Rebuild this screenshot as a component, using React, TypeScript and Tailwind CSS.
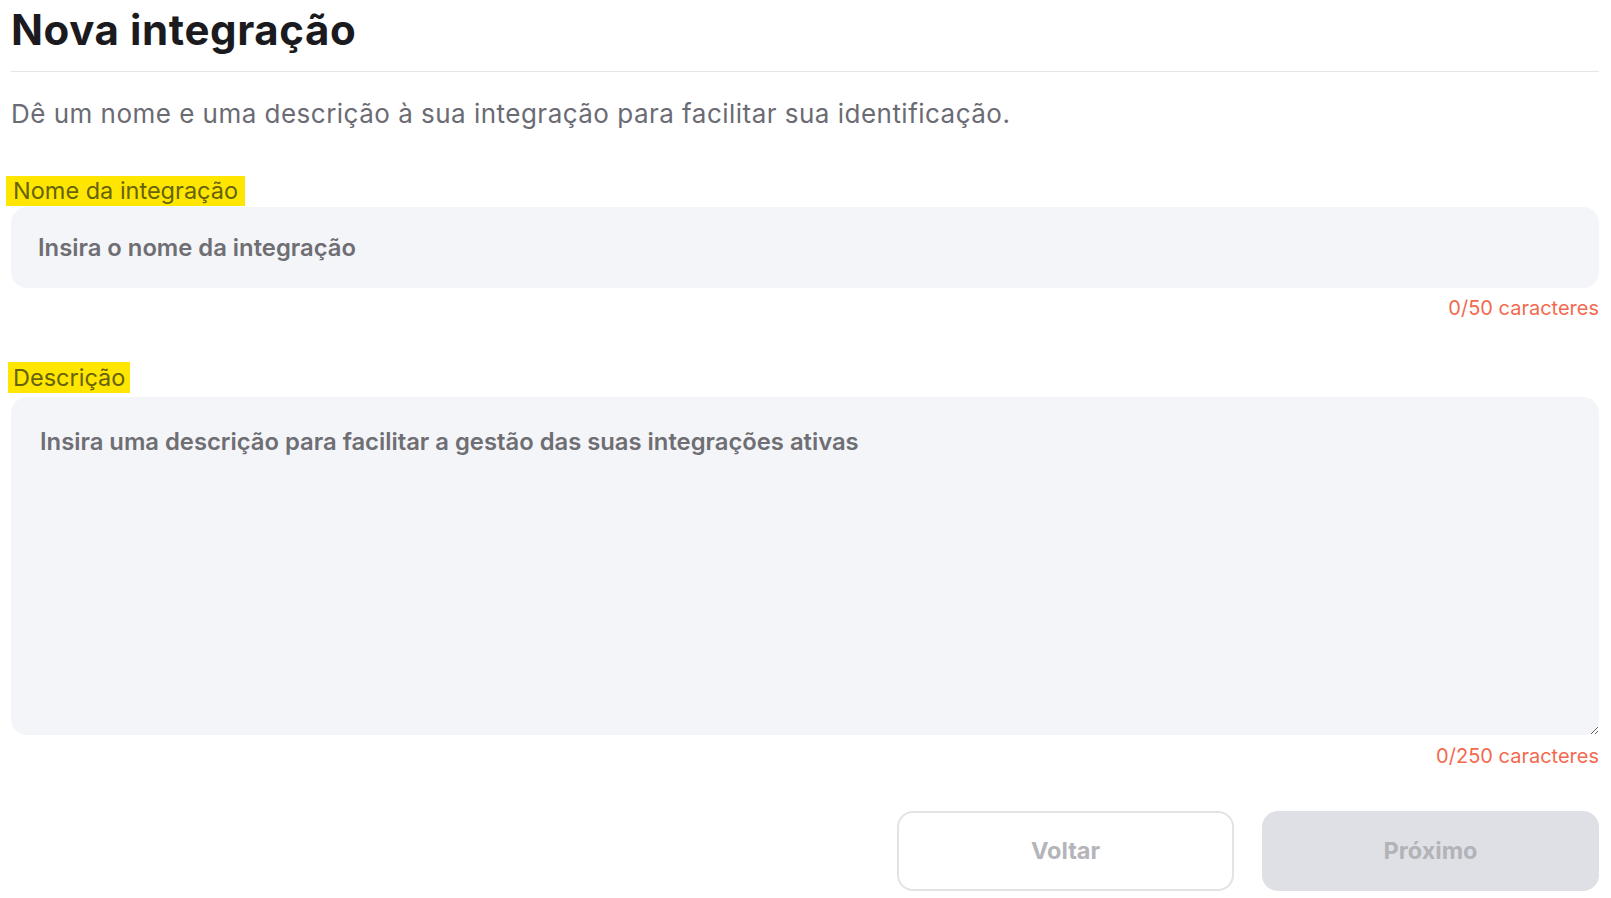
import { useState } from "react";

export default function App() {
    const [name, setName] = useState("");
    const [desc, setDesc] = useState("");

    return (
        <main className="min-h-screen bg-white pl-[11px] pr-[12px] pt-[6px] font-['Inter',sans-serif]">
            <h1 className="text-[42px] font-bold leading-[48px] tracking-[0.6px] text-[#1b1b1f]">Nova integração</h1>
            <div className="mt-[17px] h-px bg-[#e5e6ea]" />

            <p className="mt-[26px] text-[26px] leading-[32px] tracking-[0.48px] text-[#6b6b73]">
                Dê um nome e uma descrição à sua integração para facilitar sua identificação.
            </p>

            <label className="mt-[46px] -ml-[5px] inline-block bg-[#ffe600] px-[7px] text-[23.5px] leading-[30px] text-[#66620a]">
                Nome da integração
            </label>
            <input
                value={name}
                maxLength={50}
                onChange={e => setName(e.target.value)}
                placeholder="Insira o nome da integração"
                className="mt-px block h-[81px] w-full rounded-[16px] bg-[#f4f5f9] px-[27px] text-[23.8px] font-semibold text-[#2a2a2e] outline-none placeholder:text-[#6e6e73]"
            />
            <p className="mt-[6px] text-right text-[20px] leading-[28px] text-[#f26a4f]">{name.length}/50 caracteres</p>

            <label className="mt-[40px] -ml-[3px] inline-block bg-[#ffe600] px-[5px] text-[23.5px] leading-[31px] text-[#66620a]">
                Descrição
            </label>
            <textarea
                value={desc}
                maxLength={250}
                onChange={e => setDesc(e.target.value)}
                placeholder="Insira uma descrição para facilitar a gestão das suas integrações ativas"
                className="mt-[4px] block h-[338px] w-full resize-y rounded-[16px] bg-[#f4f5f9] px-[29px] pt-[28px] text-[23.8px] font-semibold leading-[33px] text-[#2a2a2e] outline-none placeholder:text-[#6e6e73]"
            />
            <p className="mt-[7px] text-right text-[20px] leading-[28px] text-[#f26a4f]">{desc.length}/250 caracteres</p>

            <div className="mt-[41px] flex justify-end gap-[28px]">
                <button className="h-[80px] w-[337px] rounded-[16px] border-2 border-[#e2e3e7] bg-white text-[23.5px] font-bold text-[#b4b5ba]">
                    Voltar
                </button>
                <button disabled className="h-[80px] w-[337px] rounded-[16px] bg-[#dfe0e5] text-[23.5px] font-bold text-[#b2b3b8]">
                    Próximo
                </button>
            </div>
        </main>
    );
}
